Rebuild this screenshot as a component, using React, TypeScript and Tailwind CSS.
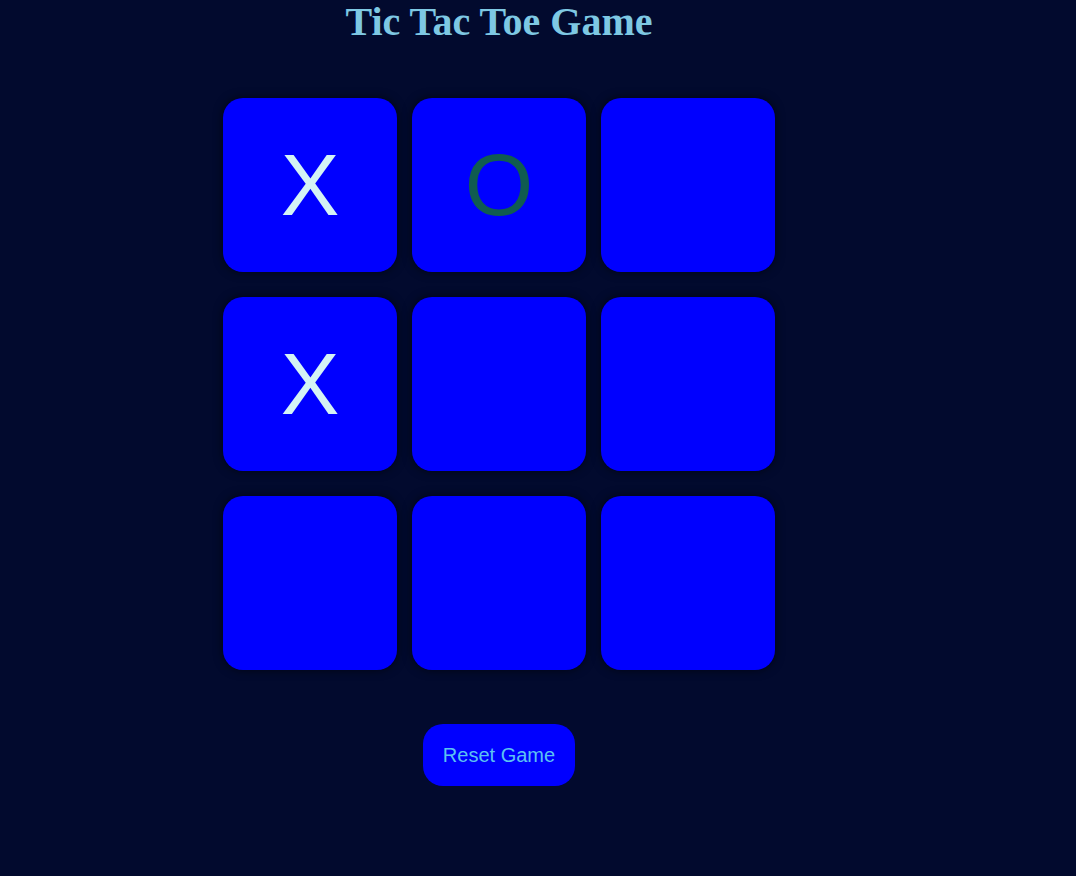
import React from "react";

const cells = ["X", "O", "", "X", "", "", "", "", ""];

export default function App() {
  return (
    <div className="min-h-[876px] w-full bg-[#020a2e]">
      <div className="flex w-[998px] flex-col items-center">
        <h1
          className="m-0 text-[40px] font-bold leading-[1.107] text-[#7ec8e3]"
          style={{ fontFamily: '"Liberation Serif", "Times New Roman", serif' }}
        >
          Tic Tac Toe Game
        </h1>
        <div className="mt-[54px] grid grid-cols-[174px_174px_174px] gap-x-[15px] gap-y-[25px]">
          {cells.map((c, i) => (
            <div
              key={i}
              className={`flex h-[174px] w-[174px] items-center justify-center rounded-[20px] bg-[#0000ff] text-[88px] leading-none shadow-[0_0_10px_rgba(0,0,0,0.6)] ${
                c === "X" ? "text-[#d4f3f5]" : "text-[#105c50]"
              }`}
              style={{ fontFamily: '"Liberation Sans", Arial, sans-serif' }}
            >
              {c}
            </div>
          ))}
        </div>
        <button
          className="mt-[54px] rounded-[20px] bg-[#0000ff] px-[20px] py-[20px] text-[20px] leading-[22px] text-[#5cc2f2]"
          style={{ fontFamily: '"Liberation Sans", Arial, sans-serif' }}
        >
          Reset Game
        </button>
      </div>
    </div>
  );
}
